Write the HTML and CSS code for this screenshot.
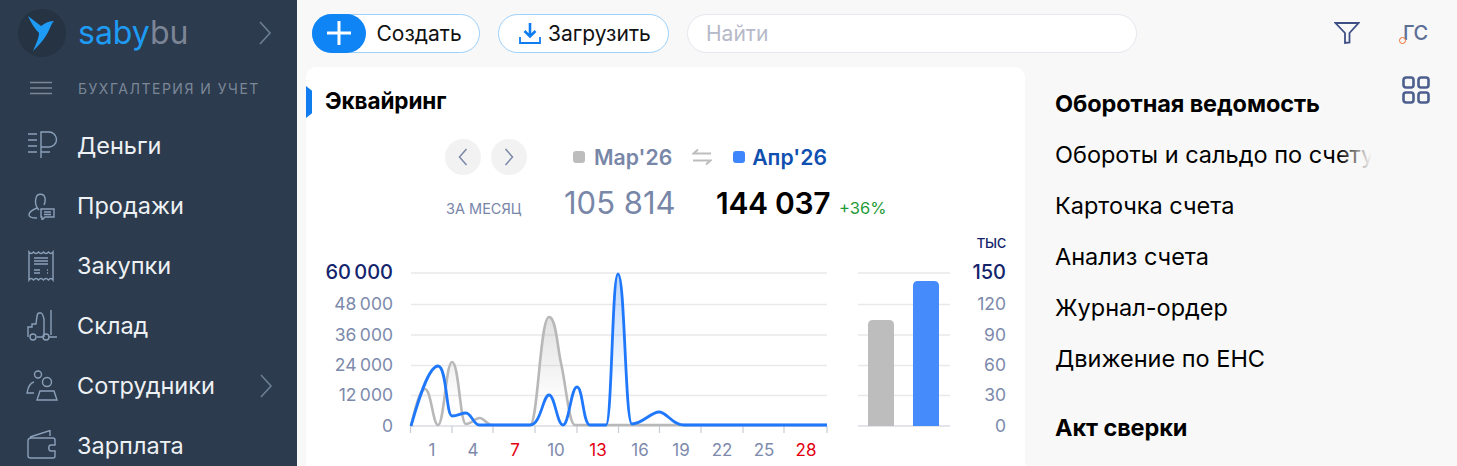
FILE: index.html
```html
<!DOCTYPE html>
<html lang="ru">
<head>
  <meta charset="UTF-8">
  <title>Saby — Бухгалтерия и учет</title>
  <link rel="stylesheet" href="styles.css">
</head>
<body>
<div class="app">
  <!-- SIDEBAR -->
  <aside class="sidebar">
    <div class="logo-row">
      <div class="logo-circle">
        <svg width="48" height="48" viewBox="0 0 48 48"><path d="M10 7L23 17C26 15 30 12 36 12C33 15 32 20 29 25C25 32 20 37 15 42C18 35 21 29 21 24C17 20 13 14 10 7Z" fill="#1e9bf5"/></svg>
      </div>
      <div class="logo-text"><span class="logo-saby">saby</span><span class="logo-bu">bu</span></div>
      <svg class="chevron" width="14" height="26" viewBox="0 0 14 26"><path d="M2 2 L12 13 L2 24" /></svg>
    </div>
    <div class="section-row">
      <svg class="burger" width="22" height="14" viewBox="0 0 22 14"><path d="M0 1.500H22M0 7H22M0 12.500H22" /></svg>
      <span>БУХГАЛТЕРИЯ И УЧЕТ</span>
    </div>
    <nav class="menu">
      <div class="menu-item">
        <svg class="menu-icon" width="32" height="30" viewBox="0 0 32 30"><path d="M15 28V2H23A7.500 7.500 0 0 1 23 17H15M2 4H11M2 10H11M2 16H11M2 22H11M15 22H24"/></svg>
        <span>Деньги</span>
      </div>
      <div class="menu-item">
        <svg class="menu-icon" width="30" height="30" viewBox="0 0 30 30"><path d="M13 20C9 16 9 12 10 8C11 3 18 3 19 8C19.500 11 19 13 18 15M11 18C6 20 3 22 3 25C3 27 6 28 11 28M15 19H28V27H19L16 30V27H15ZM18 22H25M18 24.500H25"/></svg>
        <span>Продажи</span>
      </div>
      <div class="menu-item">
        <svg class="menu-icon" width="30" height="32" viewBox="0 0 30 32"><path d="M3 2Q5 5 7.500 2Q10 5 12.500 2Q15 5 17.500 2Q20 5 22.500 2Q25 5 27 2V30Q25 27 22.500 30Q20 27 17.500 30Q15 27 12.500 30Q10 27 7.500 30Q5 27 3 30ZM8 8H22M8 11H22M8 14H22M8 20H14M8 23H14M21 20H22M21 23H22"/></svg>
        <span>Закупки</span>
      </div>
      <div class="menu-item">
        <svg class="menu-icon" width="32" height="32" viewBox="0 0 32 32"><path d="M25 0V25M18 27V9C17 5 16 3 15 3H13C11 3 11 6 10 14H6V17H2V27M11 27H17M23 27H31"/><circle cx="7" cy="27" r="3"/><circle cx="20" cy="27" r="3"/></svg>
        <span>Склад</span>
      </div>
      <div class="menu-item">
        <svg class="menu-icon" width="32" height="32" viewBox="0 0 32 32"><circle cx="12" cy="4.500" r="3.500"/><circle cx="21" cy="12" r="4.500"/><path d="M8 12C4 13 2 17 1 23H8M11 30L14 21H28L31 30Z"/></svg>
        <span>Сотрудники</span>
        <svg class="chevron item-chevron" width="14" height="26" viewBox="0 0 14 26"><path d="M2 2 L12 13 L2 24" /></svg>
      </div>
      <div class="menu-item">
        <svg class="menu-icon" width="32" height="32" viewBox="0 0 32 32"><path d="M4 7L24 .5V6M5 8H27C28 8 29 9 29 10V15H25C22 15 22 21 25 21H29V26C29 27 28 28 27 28H5C3 28 2 27 2 26V11C2 9 3 8 5 8Z"/></svg>
        <span>Зарплата</span>
      </div>
    </nav>
  </aside>

  <main class="main">
    <!-- TOP BAR -->
    <div class="topbar">
      <div class="btn-create">
        <span class="btn-plus"><svg width="26" height="26" viewBox="0 0 26 26"><path d="M13 1V25M1 13H25"/></svg></span>
        <span class="btn-label">Создать</span>
      </div>
      <div class="btn-upload">
        <svg width="24" height="24" viewBox="0 0 24 24"><path d="M12 2V15M6.500 10L12 15.500L17.500 10" class="upload-arrow"/><path d="M2 16V22H22V16" class="upload-tray"/></svg>
        <span class="btn-label">Загрузить</span>
      </div>
      <div class="search">Найти</div>
      <svg class="filter-icon" width="26" height="24" viewBox="0 0 26 24"><path d="M1.500 2H24.500L15.500 12V21.500L11 22V12Z"/></svg>
      <div class="user-mark">ГС</div>
    </div>

    <div class="content">
      <!-- CARD -->
      <section class="card">
        <div class="card-title">Эквайринг</div>
        <div class="period-row">
          <span class="round-btn"><svg width="10" height="18" viewBox="0 0 10 18"><path d="M8.500 1L1.500 9L8.500 17"/></svg></span>
          <span class="round-btn"><svg width="10" height="18" viewBox="0 0 10 18"><path d="M1.500 1L8.500 9L1.500 17"/></svg></span>
          <span class="legend legend-prev"><i class="legend-mark mark-grey"></i>Мар'26</span>
          <svg class="swap-icon" width="20" height="18" viewBox="0 0 20 18"><path d="M6 1.500L1.500 5.500H19M14 16.500L18.500 12.500H1"/></svg>
          <span class="legend legend-cur"><i class="legend-mark mark-blue"></i>Апр'26</span>
        </div>
        <div class="sum-row">
          <span class="sum-label">ЗА МЕСЯЦ</span>
          <span class="sum-prev">105 814</span>
          <span class="sum-cur">144 037</span>
          <span class="sum-diff">+36%</span>
        </div>
        <svg class="chart" width="719" height="236" viewBox="306 230 719 236">
          <defs>
            <linearGradient id="fillBlue" x1="0" y1="0" x2="0" y2="1">
              <stop offset="0" stop-color="#4a90f5" stop-opacity=".38"/>
              <stop offset=".75" stop-color="#4a90f5" stop-opacity="0"/>
            </linearGradient>
            <linearGradient id="fillGrey" x1="0" y1="0" x2="0" y2="1">
              <stop offset="0" stop-color="#a8a8a8" stop-opacity=".35"/>
              <stop offset=".8" stop-color="#a8a8a8" stop-opacity="0"/>
            </linearGradient>
          </defs>
          <g class="grid">
            <path d="M411 273H827M411 304.500H827M411 335H827M411 365.500H827M411 395.500H827"/>
            <path d="M858 273H950M858 304.500H950M858 335H950M858 365.500H950M858 395.500H950"/>
          </g>
          <path class="axis" d="M410 426H827M858 426H950M410.500 426V433M452 426V433M493 426V433M535 426V433M577 426V433M618.500 426V433M659.500 426V433M701 426V433M743 426V433M784 426V433M827 426V433"/>

          <path fill="url(#fillGrey)" d="M411 426C416 405 420 389 425 389C431 389 433 425 438 425C444 425 446 362 452 362C459 362 460 424 466 424C471 424 475 418 480 418C484 418 487 425 492 425H530C538 425 540 317 549 317C556 317 557 345 561 363C566 385 569 425 575 425Z"/>
          <path class="line-grey" d="M411 426C416 405 420 389 425 389C431 389 433 425 438 425C444 425 446 362 452 362C459 362 460 424 466 424C471 424 475 418 480 418C484 418 487 425 492 425H530C538 425 540 317 549 317C556 317 557 345 561 363C566 385 569 425 575 425H827"/>

          <path fill="url(#fillBlue)" d="M606 425C612 425 612 274 618 274C625 274 625 424 632 424Z"/>
          <path class="line-blue" d="M411 426C417 405 428 366 438 366C447 366 446 416 452 416C458 416 461 413 466 413C471 413 474 425 479 425H530C541 425 543 395 549 395C555 395 557 425 563 425C569 425 571 387 577 387C583 387 583 425 590 425H606C612 425 612 274 618 274C625 274 625 424 632 424C642 424 651 412 659 412C667 412 672 425 684 425H827"/>

          <g class="y-label">
            <text class="y-top" x="393" y="279">60 000</text>
            <text x="393" y="310">48 000</text>
            <text x="393" y="341">36 000</text>
            <text x="393" y="371">24 000</text>
            <text x="393" y="401">12 000</text>
            <text x="393" y="432">0</text>
          </g>
          <g class="x-label">
            <text x="432" y="456">1</text>
            <text x="473" y="456">4</text>
            <text class="x-red" x="515" y="456">7</text>
            <text x="556" y="456">10</text>
            <text class="x-red" x="598" y="456">13</text>
            <text x="640" y="456">16</text>
            <text x="681" y="456">19</text>
            <text x="722" y="456">22</text>
            <text x="764" y="456">25</text>
            <text class="x-red" x="806" y="456">28</text>
          </g>

          <path class="bar-grey" d="M868 426V325Q868 320 873 320H889Q894 320 894 325V426Z"/>
          <path class="bar-blue" d="M913 426V286Q913 281 918 281H934Q939 281 939 286V426Z"/>

          <g class="y-label">
            <text class="y-unit" x="1006" y="248">тыс</text>
            <text class="y-top" x="1006" y="279">150</text>
            <text x="1006" y="310">120</text>
            <text x="1006" y="341">90</text>
            <text x="1006" y="371">60</text>
            <text x="1006" y="401">30</text>
            <text x="1006" y="432">0</text>
          </g>
        </svg>
      </section>

      <!-- REPORTS -->
      <section class="reports">
        <div class="report-item report-head">Оборотная ведомость</div>
        <div class="report-item">Обороты и сальдо по счету</div>
        <div class="report-item">Карточка счета</div>
        <div class="report-item">Анализ счета</div>
        <div class="report-item">Журнал-ордер</div>
        <div class="report-item">Движение по ЕНС</div>
        <div class="report-item report-head report-head-next">Акт сверки</div>
      </section>

      <div class="side-tools">
        <svg width="28" height="28" viewBox="0 0 28 28"><rect x="1.500" y="1.500" width="10" height="10" rx="2.500"/><rect x="16.500" y="1.500" width="10" height="10" rx="2.500"/><rect x="1.500" y="16.500" width="10" height="10" rx="2.500"/><rect x="16.500" y="16.500" width="10" height="10" rx="2.500"/></svg>
      </div>
    </div>
  </main>
</div>
</body>
</html>
```

FILE: styles.css
```css
html, body {
  margin: 0;
  padding: 0;
  height: 466px;
  overflow: hidden;
}

body {
  font-family: Inter, "Liberation Sans", sans-serif;
  background: #f8f8f8;
  color: #000;
}

.app {
  display: flex;
  height: 466px;
}

/* SIDEBAR */
.sidebar {
  width: 297px;
  flex: none;
  background: #2c3b4e;
  overflow: hidden;
}

.logo-row {
  display: flex;
  align-items: center;
  height: 48px;
  padding: 9px 0 0 18px;
}

.logo-circle {
  width: 48px;
  height: 48px;
  border-radius: 50%;
  background: #253343;
  flex: none;
}

.logo-text {
  margin-left: 12px;
  font-size: 32px;
  line-height: 48px;
  width: 180px;
}

.logo-saby {
  color: #1e9bf5;
}

.logo-bu {
  color: #7c8596;
}

.chevron path {
  fill: none;
  stroke: #6c7f94;
  stroke-width: 1.6;
}

.section-row {
  display: flex;
  align-items: center;
  gap: 26px;
  height: 30px;
  margin-top: 16px;
  padding-left: 30px;
  font-size: 14px;
  letter-spacing: 1.5px;
  color: #7c8798;
}

.burger path {
  fill: none;
  stroke: #7c8798;
  stroke-width: 1.6;
}

.menu {
  margin-top: 12px;
}

.menu-item {
  display: flex;
  align-items: center;
  position: relative;
  height: 60px;
  padding-left: 77px;
  font-size: 23.500px;
  color: #eef1f4;
}

.menu-icon {
  position: absolute;
  left: 26px;
  top: 15px;
}

.menu-icon path, .menu-icon circle {
  fill: none;
  stroke: #8aa0b8;
  stroke-width: 1.4;
}

.item-chevron {
  position: absolute;
  left: 259px;
  top: 18px;
}

/* MAIN */
.main {
  flex: 1;
  min-width: 0;
}

.topbar {
  display: flex;
  align-items: center;
  height: 67px;
  box-sizing: border-box;
  padding: 0 0 1px 15px;
}

.btn-create, .btn-upload {
  display: flex;
  align-items: center;
  box-sizing: border-box;
  height: 39px;
  background: #fff;
  border: 1.5px solid #9dd0fa;
  border-radius: 20px;
}

.btn-create {
  width: 168px;
}

.btn-plus {
  display: flex;
  align-items: center;
  justify-content: center;
  width: 54px;
  height: 39px;
  margin: 0 0 0 -1.500px;
  background: #0f84f5;
  border-radius: 20px;
}

.btn-plus path {
  fill: none;
  stroke: #fff;
  stroke-width: 3;
}

.btn-label {
  font-size: 21px;
  color: #111;
}

.btn-create .btn-label {
  margin-left: 11px;
}

.btn-upload {
  width: 171px;
  margin-left: 18px;
  padding-left: 19px;
  gap: 6px;
}

.upload-arrow {
  fill: none;
  stroke: #0f7df0;
  stroke-width: 2.6;
}

.upload-tray {
  fill: none;
  stroke: #0f7df0;
  stroke-width: 1.8;
}

.search {
  box-sizing: border-box;
  width: 450px;
  height: 39px;
  margin-left: 18px;
  padding-left: 18px;
  background: #fff;
  border: 1.5px solid #e6e7ef;
  border-radius: 20px;
  font-size: 21px;
  line-height: 38px;
  color: #b5b9c9;
}

.filter-icon {
  margin-left: 197px;
}

.filter-icon path {
  fill: none;
  stroke: #3d4f85;
  stroke-width: 1.8;
}

.user-mark {
  position: relative;
  margin-left: 43px;
  font-size: 20px;
  font-weight: 500;
  letter-spacing: -.5px;
  color: #5c6f96;
}

.user-mark::before {
  content: "";
  position: absolute;
  left: -4px;
  top: 16px;
  width: 5px;
  height: 5px;
  background: #f8f8f8;
  border: 1.5px solid #ef6a2a;
  border-radius: 50%;
}

.content {
  display: flex;
  align-items: flex-start;
}

/* CARD */
.card {
  position: relative;
  box-sizing: border-box;
  width: 719px;
  height: 399px;
  margin-left: 9px;
  background: #fff;
  border-radius: 10px 10px 0 0;
}

.card-title {
  height: 33px;
  padding: 19px 0 0 19px;
  font-size: 22.500px;
  font-weight: 700;
  line-height: 30px;
  letter-spacing: -.1px;
}

.card-title::before {
  content: "";
  position: absolute;
  left: 0;
  top: 19px;
  width: 6px;
  height: 32px;
  background: #0f7df0;
  clip-path: polygon(0 0, 100% 15%, 100% 85%, 0 100%);
}

.period-row {
  display: flex;
  align-items: center;
  height: 36px;
  margin-top: 20px;
  padding-left: 139px;
}

.round-btn {
  display: flex;
  align-items: center;
  justify-content: center;
  width: 36px;
  height: 36px;
  margin-right: 10px;
  border-radius: 50%;
  background: #f2f2f2;
}

.round-btn path {
  fill: none;
  stroke: #7b88a8;
  stroke-width: 1.5;
}

.legend {
  display: flex;
  align-items: center;
  font-size: 21.200px;
  font-weight: 600;
}

.legend-prev {
  margin-left: 36px;
  color: #7886a8;
}

.legend-cur {
  color: #0f4fb0;
  margin-left: 21px;
}

.legend-mark {
  width: 12px;
  height: 12px;
  margin-right: 9px;
  border-radius: 3px;
}

.mark-grey {
  background: #bdbdbd;
}

.mark-blue {
  margin-right: 7px;
  background: #3d86fb;
}

.swap-icon {
  margin-left: 20px;
}

.swap-icon path {
  fill: none;
  stroke: #bdbdbd;
  stroke-width: 2;
}

.sum-row {
  display: flex;
  align-items: baseline;
  height: 40px;
  margin-top: 8px;
  padding-left: 140px;
  line-height: 40px;
}

.sum-label {
  width: 118px;
  font-size: 14.500px;
  color: #7886a8;
}

.sum-prev {
  width: 152px;
  font-size: 31px;
  color: #7886a8;
}

.sum-cur {
  width: 123px;
  font-size: 30px;
  font-weight: 600;
  letter-spacing: -.3px;
}

.sum-diff {
  font-size: 16.500px;
  color: #1c9a36;
}

.chart {
  display: block;
  margin-top: 7px;
}

.grid path {
  fill: none;
  stroke: #e9e9ec;
  stroke-width: 1.4;
}

.axis {
  fill: none;
  stroke: #c8ccd6;
  stroke-width: 1.2;
}

.line-grey {
  fill: none;
  stroke: #b8b8b8;
  stroke-width: 2.6;
}

.line-blue {
  fill: none;
  stroke: #1f78fb;
  stroke-width: 2.8;
}

.bar-grey {
  fill: #bdbdbd;
}

.bar-blue {
  fill: #458bfb;
}

.y-label text {
  font-size: 17.500px;
  word-spacing: -1.500px;
  text-anchor: end;
  fill: #7d8aac;
}

.y-label .y-top {
  font-size: 20px;
  font-weight: 500;
  word-spacing: -2px;
  fill: #14246c;
}

.y-label .y-unit {
  font-size: 17px;
  letter-spacing: -.5px;
  fill: #14246c;
}

.x-label text {
  font-size: 17px;
  text-anchor: middle;
  fill: #7d8aac;
}

.x-label .x-red {
  fill: #e3000f;
}

/* REPORTS */
.reports {
  position: relative;
  box-sizing: border-box;
  width: 320px;
  margin-left: 30px;
  padding-top: 11px;
  white-space: nowrap;
  overflow: hidden;
  font-size: 23.500px;
  text-shadow: 0 0 12px #fff;
}

.reports::after {
  content: "";
  position: absolute;
  top: 65px;
  right: 0;
  width: 36px;
  height: 44px;
  background: linear-gradient(to right, rgba(248, 248, 248, 0), #f8f8f8 90%);
}

.report-item {
  height: 51px;
  line-height: 51px;
}

.report-head {
  font-weight: 700;
  letter-spacing: -.1px;
}

.report-head-next {
  margin-top: 18px;
}

.side-tools {
  margin: 9px 0 0 27px;
}

.side-tools rect {
  fill: none;
  stroke: #4d5f8e;
  stroke-width: 2.6;
}
```
